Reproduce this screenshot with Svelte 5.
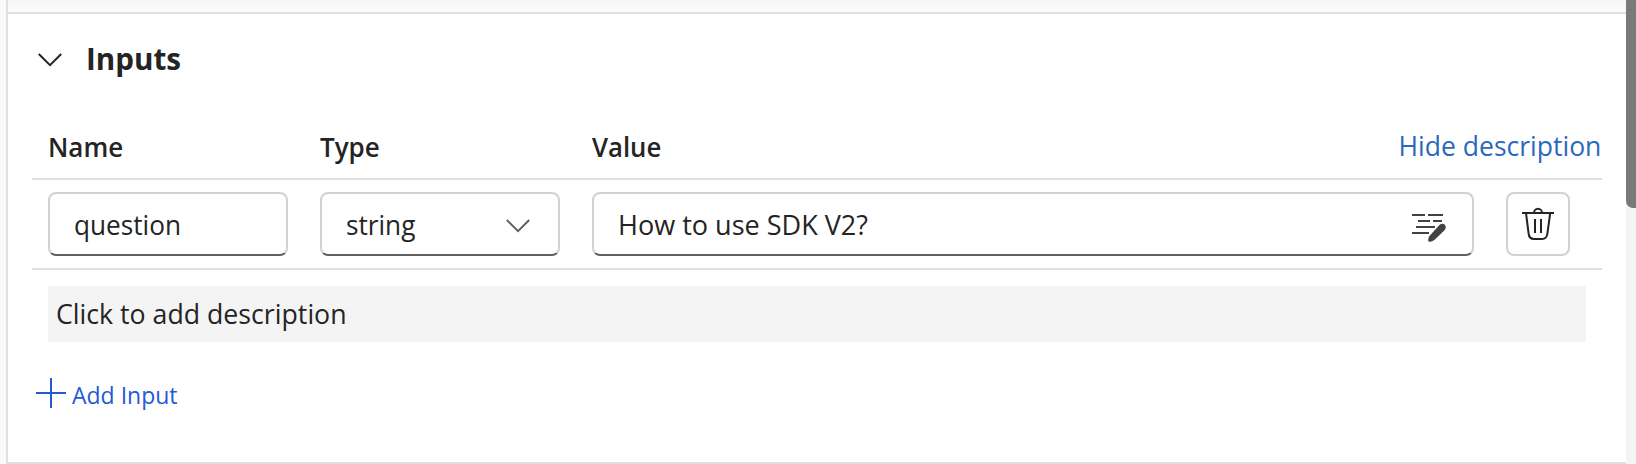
<script>
  let name = $state('question');
  let type = $state('string');
  let value = $state('How to use SDK V2?');
</script>

<div class="page">
  <div class="main">
    <div class="above"></div>
    <section class="card">
      <header class="title">
        <svg width="24" height="14" viewBox="0 0 24 14"><path d="M.8 1 12 12.1 23.2 1" fill="none" stroke="#242424" stroke-width="2" /></svg>
        <h2><span class="t-inputs">Inputs</span></h2>
      </header>
      <div class="grid head">
        <b class="t-name">Name</b>
        <b class="t-type">Type</b>
        <b class="t-value">Value</b>
        <span class="link"><span class="t-hide">Hide description</span></span>
      </div>
      <div class="grid row">
        <div class="field"><span class="t-question">{name}</span></div>
        <div class="field select">
          <span class="t-string">{type}</span>
          <svg width="24" height="14" viewBox="0 0 24 14"><path d="M.8 1 12 12.1 23.2 1" fill="none" stroke="#616161" stroke-width="2" /></svg>
        </div>
        <div class="field edit">
          <span class="t-how">{value}</span>
          <svg width="36" height="30" viewBox="0 0 36 30">
            <path d="M1 3h13M17 3h15M7 9h12M22 9h9M5 15h19M1 21h17" stroke="#424242" stroke-width="2" fill="none" />
            <path d="M28.400 13.100c1.600-1.600 4-1.700 5.400-.3s1.300 3.800-.3 5.400L23.400 28.100c-1 .9-2.600 1.500-4.300 1.700-1.200.2-2.100-.7-1.900-1.900.2-1.700.7-3.300 1.700-4.300z" fill="#424242" />
          </svg>
        </div>
        <button class="trash" aria-label="Delete">
          <svg width="32" height="34" viewBox="0 0 32 34" fill="none" stroke="#242424" stroke-width="2">
            <path d="M0 6h32M12 6a4 4.300 0 0 1 8 0M4 6l2.600 20.500Q7.200 32 12 32h8Q24.800 32 25.400 26.500L28.200 6M13 12v14M19 12v14" />
          </svg>
        </button>
      </div>
      <div class="desc"><span class="t-click">Click to add description</span></div>
      <div class="add">
        <svg width="30" height="30" viewBox="0 0 30 30"><path d="M0 15h30M15 0v30" stroke="#2459d6" stroke-width="2" /></svg>
        <span class="t-add">Add Input</span>
      </div>
    </section>
  </div>
  <div class="scroll"><div class="thumb"></div></div>
</div>

<style>
  :global(body) { margin: 0; background: #fafafa; }
  .page { display: flex; height: 464px; overflow: hidden; color: #242424; font: 27.5px/40px "Open Sans", sans-serif; }
  .page * { box-sizing: border-box; }
  .page span, .page b { white-space: nowrap; }
  .main { flex: 1; padding-left: 6px; display: flex; flex-direction: column; background: #fafafa; }
  .above { height: 12px; border-left: 2px solid #e0e0e0; background: linear-gradient(#f5f5f5, #fafafa 5px); }
  .card { flex: 1; border: 2px solid #e0e0e0; border-right: 0; background: #fff; padding: 0 24px; }
  .title { display: flex; align-items: center; gap: 24px; height: 90px; padding: 0 0 0 6px; }
  .title svg { margin-top: 2px; }
  h2 { margin: -2px 0 0; font-size: 31px; line-height: 40px; font-weight: 700; }
  .grid { display: grid; grid-template-columns: 240px 240px 882px 64px; column-gap: 32px; width: 1570px; padding-left: 16px; border-bottom: 2px solid #e0e0e0; align-items: center; }
  .head { height: 76px; padding-top: 12px; }
  .head b { font-weight: 600; }
  .link { color: #2b69bd; display: flex; justify-content: flex-end; width: 96px; margin-top: -3px; padding-right: 1px; }
  .row { height: 90px; }
  .field { height: 64px; border: 2px solid #d1d1d1; border-bottom-color: #616161; border-radius: 8px; display: flex; align-items: center; padding: 0 24px; }
  .field span { margin-top: 2px; }
  .select, .edit { justify-content: space-between; }
  .select { padding-right: 28px; }
  .select svg { margin-top: 4px; }
  .edit { padding-right: 25px; }
  .edit svg { margin-top: 6px; }
  .trash { width: 64px; height: 64px; border: 2px solid #d1d1d1; border-radius: 8px; background: #fff; padding: 0; display: flex; align-items: center; justify-content: center; }
  .desc { margin: 16px 16px 0; width: 1538px; height: 56px; background: #f4f4f4; display: flex; align-items: center; padding-left: 8px; }
  .add { display: flex; align-items: center; gap: 6px; margin-top: 34px; padding-left: 4px; height: 34px; color: #2459d6; font-size: 23.5px; }

  [class^="t-"] { display: inline-block; transform-origin: left center; }
  .t-inputs { transform: scaleX(.955); }
  .t-name, .t-type { transform: scaleX(.945); }
  .t-value { transform: scaleX(.935); }
  .t-hide { transform: scaleX(.964); transform-origin: right center; }
  .t-question, .t-string { transform: scaleX(.952); }
  .t-how { transform: scaleX(.983); }
  .t-click { transform: scaleX(.971); }
  .t-add { transform: scaleX(.978); margin-top: 3px; }

  .scroll { width: 10px; background: #f4f4f4; }
  .thumb { height: 208px; background: #7a7a7a; border-radius: 0 0 0 7px; }
</style>
